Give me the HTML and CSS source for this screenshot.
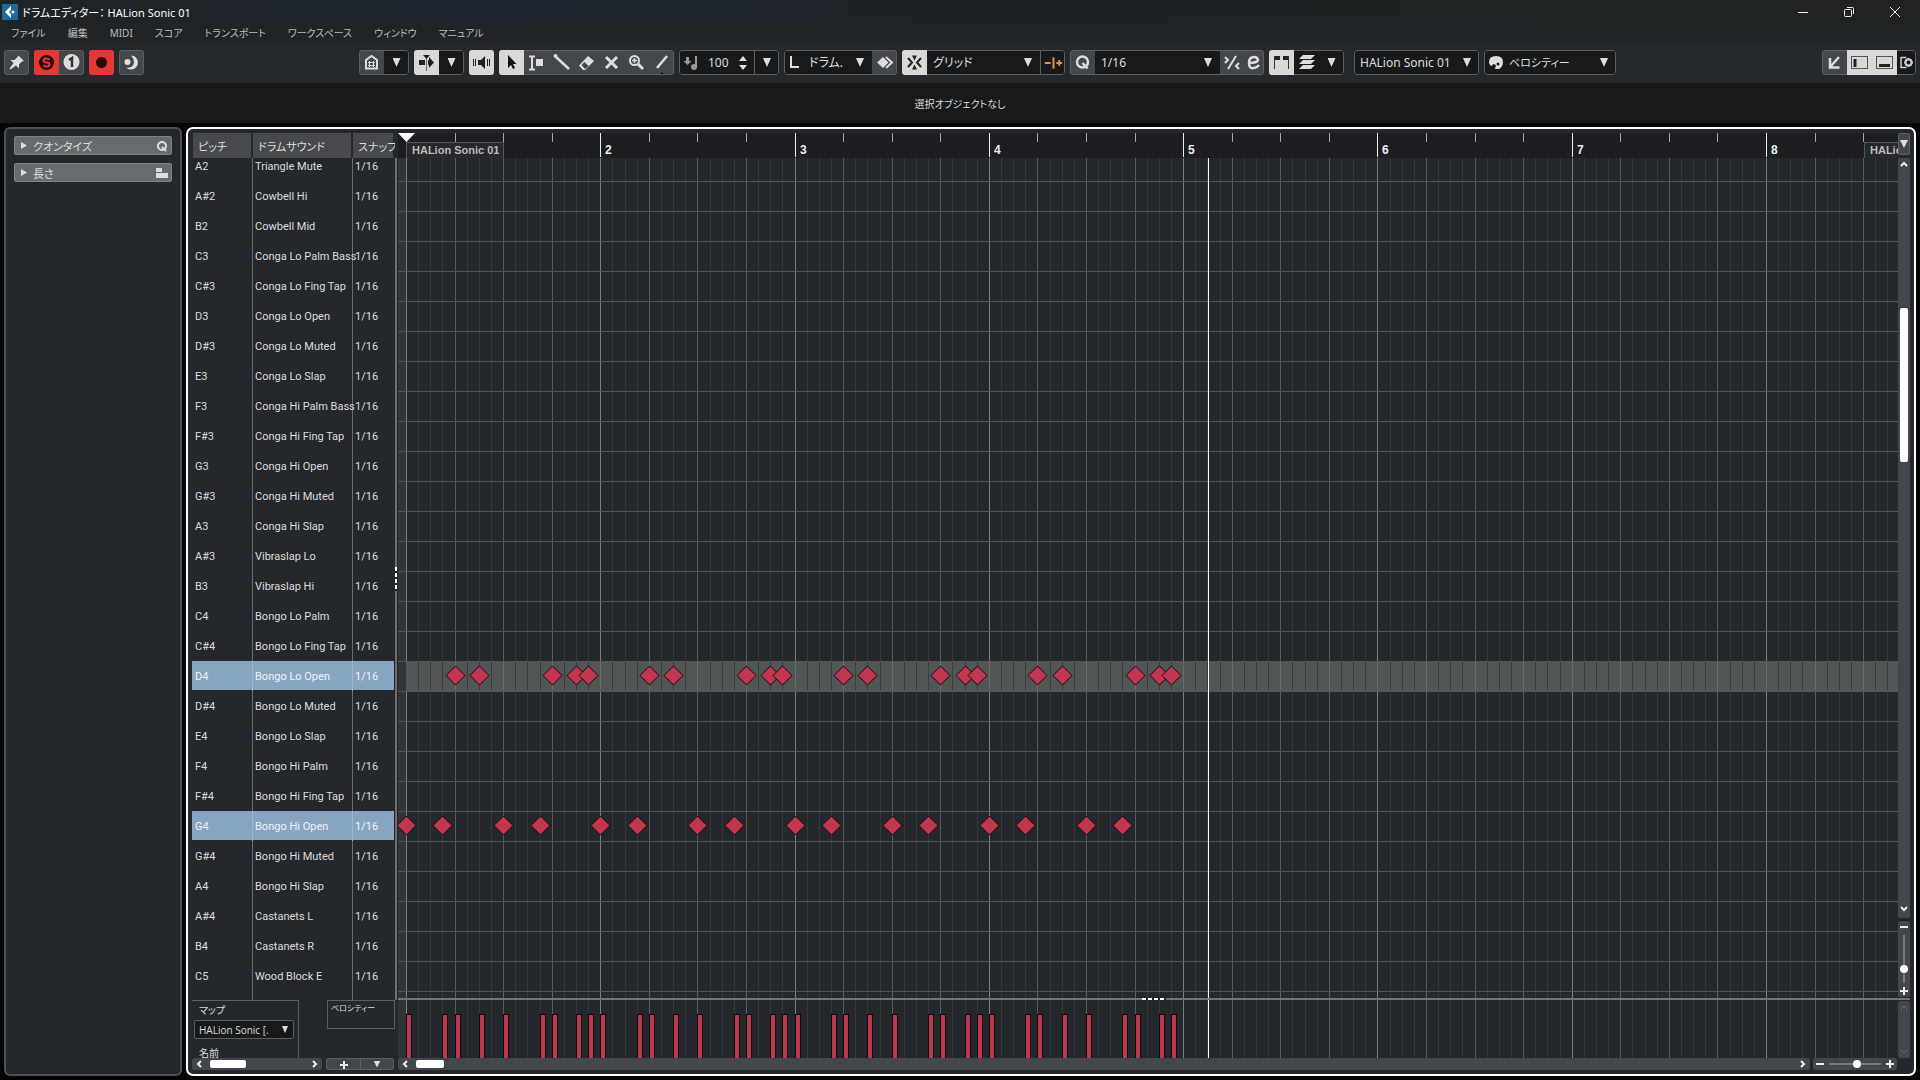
FILE: index.html
```
<!DOCTYPE html>
<html lang="ja">

<head>
  <meta charset="UTF-8">
  <meta name="viewport" content="width=device-width, initial-scale=1.0">
  <title>ドラムエディター： HALion Sonic 01</title>
  <link rel="stylesheet" href="styles.css">
</head>

<body>
  <header class="titlebar">
    <svg class="titlebar__logo" viewBox="0 0 16 16"><rect width="16" height="16" fill="#1d6a9c"/><path d="M9 2v4L7 8l2 2v4L3 8z" fill="#fff"/><circle cx="11" cy="8" r="1.500" fill="#fff"/></svg>
    <h1 class="titlebar__title">ドラムエディター： HALion Sonic 01</h1>
    <div class="titlebar__controls">
      <button aria-label="最小化"><svg viewBox="0 0 12 12"><path d="M1 6.500h10"/></svg></button>
      <button aria-label="元に戻す"><svg viewBox="0 0 12 12"><rect x="1.500" y="3.500" width="7" height="7" rx="1"/><path d="M4 1.500h5.500q1 0 1 1V8"/></svg></button>
      <button aria-label="閉じる"><svg viewBox="0 0 12 12"><path d="M1 1l10 10M11 1L1 11"/></svg></button>
    </div>
  </header>

  <nav class="menu">
    <a href="#file">ファイル</a>
    <a href="#edit">編集</a>
    <a href="#midi">MIDI</a>
    <a href="#score">スコア</a>
    <a href="#transport">トランスポート</a>
    <a href="#workspace">ワークスペース</a>
    <a href="#window">ウィンドウ</a>
    <a href="#manual">マニュアル</a>
  </nav>

  <div class="toolbar">
    <div class="group">
      <button class="tool" aria-label="ピン"><svg viewBox="0 0 25 25"><path d="M14.500 5.500l5.500 5.500-2 .5-3 3 0 4-3-3L6.500 19.500l-1-1L9.500 13l-3-3 4 0 3-3z" fill="#ddd"/></svg></button>
    </div>
    <div class="group">
      <button class="tool tool--red" aria-label="ソロ"><svg viewBox="0 0 25 25"><circle cx="12.500" cy="12.500" r="7.500" fill="#2d0606"/><path d="M15.500 10q-.5-1.500-3-1.500T9.500 10.500t3 2 3 2-3 2-3-1.500" fill="none" stroke="#e53737" stroke-width="2"/></svg></button>
      <button class="tool" aria-label="チャンネル"><svg viewBox="0 0 25 25"><circle cx="12.500" cy="12" r="8" fill="#ddd"/><path d="M10 10l3-2v9" fill="none" stroke="#333" stroke-width="2.500"/></svg></button>
    </div>
    <div class="group">
      <button class="tool tool--red" aria-label="録音"><svg viewBox="0 0 25 25"><circle cx="12.500" cy="12.500" r="5.500" fill="#2d0606"/></svg></button>
    </div>
    <div class="group">
      <button class="tool" aria-label="レトロスペクティブ録音"><svg viewBox="0 0 25 25"><path d="M12 5.500a7 7 0 1 1-5 12q7 1 8-5 0-4-3-7z" fill="#ddd"/><circle cx="8.500" cy="12" r="3" fill="#ddd"/></svg></button>
    </div>

    <div class="group group--main">
      <button class="tool" aria-label="スナップショット"><svg viewBox="0 0 25 25"><path d="M7 18.500V10l5.500-4L18 10v8.500z" fill="none" stroke="#ddd" stroke-width="2"/><path d="M9 12.500h7M9 15.500h7M10.500 11v6M14.500 11v6" stroke="#ddd"/></svg></button>
      <button class="tool tool--arrow" aria-label="スナップショット一覧"></button>
    </div>
    <div class="group">
      <button class="tool tool--on" aria-label="オートスクロール"><svg viewBox="0 0 25 25"><path d="M5 10h6v5H5zM14 10h1V7l5 5.500-5 5.500v-3h-1z" fill="#222"/><path d="M12.500 7v14" stroke="#666"/><path d="M9 5h7l-3.500 4z" fill="#222"/></svg></button>
      <button class="tool tool--arrow" aria-label="オートスクロール設定"></button>
    </div>
    <div class="group">
      <button class="tool tool--on" aria-label="試聴"><svg viewBox="0 0 25 25"><path d="M9 10h3l4-4v13l-4-4H9z" fill="#222"/><path d="M4.500 9v7M6.500 9v7M18.500 9v7M20.500 9v7" stroke="#222"/></svg></button>
    </div>
    <div class="group group--tools">
      <button class="tool tool--on" aria-label="選択"><svg viewBox="0 0 25 25"><path d="M9 5v13l3-3 2 4 2-1-2-4h3.500z" fill="#111"/></svg></button>
      <button class="tool" aria-label="範囲"><svg viewBox="0 0 25 25"><path d="M5 6.500h6M5 19.500h6M8 7v12" stroke="#ddd" stroke-width="2"/><path d="M12 9h7v7h-7z" fill="#ddd"/></svg></button>
      <button class="tool" aria-label="ドラムスティック"><svg viewBox="0 0 25 25"><path d="M7 7l13 12" stroke="#ddd" stroke-width="2.500"/><circle cx="6.500" cy="6" r="2" fill="#ddd"/></svg></button>
      <button class="tool" aria-label="消しゴム"><svg viewBox="0 0 25 25"><path d="M5 15.500L14 6l6 5-9 9H9z" fill="#ddd"/><path d="M7.500 15l3-3 4 4-3.500 3z" fill="#43464a"/></svg></button>
      <button class="tool" aria-label="ミュート"><svg viewBox="0 0 25 25"><path d="M7 7l11 11M18 7L7 18" stroke="#ddd" stroke-width="3"/></svg></button>
      <button class="tool" aria-label="ズーム"><svg viewBox="0 0 25 25"><circle cx="10.500" cy="10.500" r="4.500" fill="none" stroke="#ddd" stroke-width="2"/><path d="M14 14l5 5" stroke="#ddd" stroke-width="3"/><path d="M8 10.500h5M10.500 8v5" stroke="#ddd" stroke-width="1.500"/></svg></button>
      <button class="tool" aria-label="ライン"><svg viewBox="0 0 25 25"><path d="M8 18L18 6" stroke="#ddd" stroke-width="2.500"/><path d="M10 25l3-3 3 3z" fill="#111"/></svg></button>
    </div>
    <div class="group">
      <label class="velocity">
        <svg viewBox="0 0 25 25"><path d="M7 7h3v4h2.500L8.500 15l-4-4H7z" fill="#999"/><path d="M17 6v11" stroke="#999" stroke-width="2"/><circle cx="15" cy="17" r="3" fill="#999"/></svg>
        <input type="text" value="100" aria-label="挿入ベロシティー">
        <svg class="velocity__spin" viewBox="0 0 10 16"><path d="M5 1l4 5H1zM5 15l4-5H1z" fill="#ddd"/></svg>
      </label>
      <button class="tool tool--arrow tool--line" aria-label="ベロシティー一覧"></button>
    </div>
    <div class="group">
      <label class="drop drop--length">
        <svg viewBox="0 0 25 25"><path d="M7 6v11h8" fill="none" stroke="#ddd" stroke-width="2"/></svg>
        <select aria-label="長さ"><option>ドラム.</option></select>
      </label>
      <button class="tool" aria-label="長さリンク"><svg viewBox="0 0 25 25"><path d="M5 12.500L11 7l5.500 5.500L11 18z" fill="#ddd"/><path d="M14 7l6 5.500-6 5.500" fill="none" stroke="#ddd" stroke-width="2"/></svg></button>
    </div>
    <div class="group">
      <button class="tool tool--on" aria-label="スナップ"><svg viewBox="0 0 25 25"><path d="M6 8l4 4.500L6 17M19 8l-4 4.500 4 4.500" fill="none" stroke="#222" stroke-width="2"/><path d="M10 5.500h5l-2.500 5zM10 19.500h5l-2.500-5z" fill="#222"/></svg></button>
      <label class="drop drop--grid"><select aria-label="スナップタイプ"><option>グリッド</option></select></label>
      <button class="tool tool--dark tool--line" aria-label="相対グリッド"><svg viewBox="0 0 25 25"><path d="M4 13h6M13 7v12M16 13h6M19 10v6" stroke="#e09a45" stroke-width="2"/></svg></button>
    </div>
    <div class="group">
      <button class="tool" aria-label="クオンタイズを適用"><svg viewBox="0 0 25 25"><circle cx="12.500" cy="12" r="5.500" fill="none" stroke="#ddd" stroke-width="2.500"/><path d="M12.500 13l5 5.500" stroke="#ddd" stroke-width="2.500"/></svg></button>
      <label class="drop drop--quantize"><select aria-label="クオンタイズプリセット"><option>1/16</option></select></label>
      <button class="tool tool--slim" aria-label="ソフトクオンタイズ"><svg viewBox="0 0 22 25"><path d="M8 19L16 6" stroke="#ddd" stroke-width="2"/><path d="M5 7l3 3-3 3M19 13l-3 3 3 3" fill="none" stroke="#ddd" stroke-width="2"/></svg></button>
      <button class="tool tool--slim" aria-label="クオンタイズパネル"><svg viewBox="0 0 22 25"><path d="M7 13q8 0 9-3-.5-3-4-3-5 0-5 6t4.500 5q3 0 5.500-3" fill="none" stroke="#ddd" stroke-width="2.500"/></svg></button>
    </div>
    <div class="group">
      <button class="tool tool--on" aria-label="パート境界を表示"><svg viewBox="0 0 25 25"><path d="M5.500 19V7M19.500 19V7" stroke="#333"/><path d="M5 6h6v4H6zM20 6h-6v4h5z" fill="#222"/></svg></button>
      <button class="tool tool--dark" aria-label="パートのみ編集"><svg viewBox="0 0 25 25"><path d="M9 5h12l-4 4H5zM9 10h12l-4 4H5zM9 15h12l-4 4H5z" fill="#ddd"/></svg></button>
      <button class="tool tool--arrow" aria-label="パート一覧"></button>
    </div>
    <div class="group group--gap">
      <label class="drop drop--part"><select aria-label="編集中のパート"><option>HALion Sonic 01</option></select></label>
    </div>
    <div class="group">
      <label class="drop drop--color">
        <svg viewBox="0 0 25 25"><path d="M12 6q7 0 7 6 0 5-4 7l-4 0 1-4-3-1-1 2q-3-1-3-4 0-6 7-6z" fill="#ddd"/><circle cx="14" cy="14" r="1.500" fill="#17191b"/></svg>
        <select aria-label="カラー"><option>ベロシティー</option></select>
      </label>
    </div>

    <div class="group group--right">
      <button class="tool" aria-label="下ゾーンで開く"><svg viewBox="0 0 25 25"><path d="M17 7l-8 9M8 8v9.500h9.500" fill="none" stroke="#ddd" stroke-width="2.500"/></svg></button>
      <button class="tool tool--on" aria-label="左ゾーン"><svg viewBox="0 0 25 25"><rect x="4.500" y="6.500" width="16" height="12" fill="none" stroke="#555"/><path d="M8 9v8" stroke="#222" stroke-width="3"/></svg></button>
      <button class="tool tool--on" aria-label="下ゾーン"><svg viewBox="0 0 25 25"><rect x="4.500" y="6.500" width="16" height="12" fill="none" stroke="#555"/><path d="M7 15.500h11" stroke="#222" stroke-width="3"/></svg></button>
      <button class="tool tool--dark tool--cog" aria-label="レイアウト設定"><svg viewBox="0 0 18 25"><path d="M9 7.500H3.500v10H9" fill="none" stroke="#ccc" stroke-width="1.500"/><circle cx="11" cy="12.500" r="3" fill="none" stroke="#ccc" stroke-width="2"/><path d="M11 8v2M11 15v2M6.500 12.500h2M13.500 12.500h2M8 9.500l1 1M13 14.500l1 1M14 9.500l-1 1M9 14.500l-1 1" stroke="#ccc" stroke-width="2"/></svg></button>
    </div>
  </div>

  <div class="infoline">選択オブジェクトなし</div>

  <main class="workspace">
    <aside class="inspector">
      <button class="inspector__item"><span>クオンタイズ</span><svg viewBox="0 0 12 12"><circle cx="6" cy="6" r="4" fill="none" stroke="#ddd" stroke-width="2"/><path d="M6 7l4 4" stroke="#ddd" stroke-width="2"/></svg></button>
      <button class="inspector__item"><span>長さ</span><svg viewBox="0 0 12 12"><path d="M0 1h6v4H0zM0 6h12v5H0z" fill="#ddd"/></svg></button>
    </aside>

    <section class="editor">
      <div class="sounds">
        <table class="sounds__table">
          <thead>
            <tr><th class="sounds__pitch">ピッチ</th><th class="sounds__name">ドラムサウンド</th><th>スナップ</th></tr>
          </thead>
          <tbody id="sounds"></tbody>
        </table>
      </div>
      <div class="splitter"></div>
      <div class="ruler" id="ruler">
        <span class="ruler__part">HALion Sonic 01</span>
      </div>
      <div class="notes"><svg id="notes"></svg></div>
      <div class="divider"></div>

      <div class="map">
        <div class="map__box">
          <label for="map">マップ</label>
          <div class="drop drop--map"><select id="map"><option>HALion Sonic [.</option></select></div>
          <span>名前</span>
        </div>
        <div class="map__lane">ベロシティー</div>
      </div>
      <div class="lane"><svg id="lane"></svg></div>

      <button class="ruler-menu tool--arrow" aria-label="ルーラー形式"></button>
      <div class="side">
        <div class="vscroll">
          <svg viewBox="0 0 12 12"><path d="M3 8l3-3 3 3"/></svg>
          <div class="vscroll__track"><div class="vscroll__thumb"></div></div>
          <svg viewBox="0 0 12 12"><path d="M3 4l3 3 3-3"/></svg>
        </div>
        <div class="vzoom">
          <svg viewBox="0 0 12 12"><path d="M2 6h8"/></svg>
          <input type="range" value="76" aria-label="縦ズーム">
          <svg viewBox="0 0 12 12"><path d="M2 6h8M6 2v8"/></svg>
        </div>
      </div>
      <div class="lane-scroll">
        <svg viewBox="0 0 12 12"><path d="M3 8l3-3 3 3"/></svg>
        <svg viewBox="0 0 12 12"><path d="M3 4l3 3 3-3"/></svg>
      </div>

      <div class="left-foot">
        <div class="hscroll hscroll--list">
          <svg viewBox="0 0 12 12"><path d="M7 3L4 6l3 3"/></svg>
          <div class="hscroll__thumb"></div>
          <svg viewBox="0 0 12 12"><path d="M5 3l3 3-3 3"/></svg>
        </div>
        <div class="lane-buttons">
          <button aria-label="レーンを追加"><svg viewBox="0 0 12 12"><path d="M2 6h8M6 2v8"/></svg></button>
          <button class="tool--arrow" aria-label="レーン設定"></button>
        </div>
      </div>
      <div class="right-foot">
        <div class="hscroll hscroll--grid">
          <svg viewBox="0 0 12 12"><path d="M7 3L4 6l3 3"/></svg>
          <div class="hscroll__thumb"></div>
          <svg viewBox="0 0 12 12"><path d="M5 3l3 3-3 3"/></svg>
        </div>
        <div class="hzoom">
          <svg viewBox="0 0 12 12"><path d="M2 6h8"/></svg>
          <input type="range" value="54" aria-label="横ズーム">
          <svg viewBox="0 0 12 12"><path d="M2 6h8M6 2v8"/></svg>
        </div>
      </div>
    </section>
  </main>

  <script src="script.js"></script>
</body>

</html>
```
FILE: styles.css
```
:root {
  --bg: #24282c;
  --dark: #17191b;
  --button: #43464a;
  --line: #5c5f62;
  --text: #dcdcdc;
}

* {
  margin: 0;
  padding: 0;
  box-sizing: border-box;
}

body {
  display: flex;
  flex-direction: column;
  height: 100vh;
  overflow: hidden;
  background: #050506;
  color: var(--text);
  font-family: 'Noto Sans', 'Noto Sans CJK JP', sans-serif;
  font-size: 12px;
  font-feature-settings: 'palt';
}

button,
input,
select {
  font: inherit;
  font-feature-settings: inherit;
  color: inherit;
  background: none;
  border: 0;
  border-radius: 0;
  outline: none;
}

svg {
  display: block;
}

/* TITLE AND MENU */
.titlebar {
  display: flex;
  align-items: center;
  height: 23px;
  padding-left: 2px;
  background: linear-gradient(90deg, #202324 0, #1b242e 25%, #1e2225 50%, #202321 100%);
}

.titlebar__logo {
  width: 16px;
  height: 16px;
  margin-right: 4px;
}

.titlebar__title {
  font-size: 11px;
  font-weight: 400;
  color: #fff;
}

.titlebar__controls {
  display: flex;
  gap: 34px;
  margin-left: auto;
  margin-right: 19px;
}

.titlebar__controls svg {
  width: 12px;
  height: 12px;
  fill: none;
  stroke: #eee;
}

.menu {
  display: flex;
  gap: 22px;
  height: 20px;
  padding-left: 11px;
  line-height: 20px;
  font-size: 10px;
  background: #212427;
}

.menu a {
  color: #bbb;
  text-decoration: none;
}

/* TOOLBAR */
.toolbar {
  display: flex;
  gap: 5px;
  height: 40px;
  padding: 7px 4px 8px;
  background: #25292d;
}

.group {
  display: flex;
  flex: none;
  height: 25px;
  border-radius: 3px;
  overflow: hidden;
  position: relative;
  background: var(--dark);
}

.group::after {
  content: '';
  position: absolute;
  inset: 0;
  border: 1px solid var(--line);
  border-radius: 3px;
  pointer-events: none;
}

.group--main {
  margin-left: 210px;
}

.group--gap {
  margin-left: 5px;
}

.group--right {
  margin-left: auto;
}

.tool {
  width: 25px;
  height: 25px;
  background: var(--button);
}

.tool svg {
  width: 100%;
  height: 25px;
}

.tool--on {
  background: #d8d8d8;
  position: relative;
  z-index: 1;
}

.tool--red {
  background: #e53737;
  position: relative;
  z-index: 1;
}

.tool--dark {
  background: var(--dark);
}

.tool--line {
  border-left: 1px solid var(--line);
}

.tool--slim {
  width: 22px;
}

.tool--cog {
  width: 19px;
}

.tool--arrow {
  display: grid;
  place-items: center;
}

.tool.tool--arrow {
  background: var(--dark);
}

.tool--arrow::after,
.drop::after {
  content: '';
  width: 8px;
  height: 9px;
  background: #ddd;
  clip-path: polygon(0 0, 100% 0, 50% 100%);
}

.velocity {
  display: flex;
  align-items: center;
  width: 75px;
}

.velocity svg {
  width: 25px;
  height: 25px;
}

.velocity input {
  width: 30px;
  margin-left: 4px;
}

.velocity .velocity__spin {
  width: 10px;
  height: 16px;
}

.drop {
  display: flex;
  align-items: center;
  padding-right: 8px;
}

.drop svg {
  flex: none;
  width: 25px;
  height: 25px;
}

.drop select {
  flex: 1;
  min-width: 0;
  height: 100%;
  padding-left: 6px;
  appearance: none;
}

.drop svg + select {
  padding-left: 0;
}

.drop--length {
  width: 88px;
}

.drop--grid {
  width: 113px;
}

.drop--quantize {
  width: 125px;
}

.drop--part {
  width: 125px;
}

.drop--color {
  width: 132px;
}

.drop--color select {
  font-size: 11px;
}

.infoline {
  height: 40px;
  line-height: 42px;
  text-align: center;
  font-size: 10px;
  background: var(--dark);
}

/* WORKSPACE */
.workspace {
  flex: 1;
  min-height: 0;
  display: flex;
  gap: 4px;
  padding: 4px;
}

.inspector {
  display: flex;
  flex-direction: column;
  gap: 8px;
  width: 178px;
  padding: 7px 8px;
  border: 2px solid #4d4f52;
  border-radius: 6px;
  background: var(--bg);
}

.inspector__item {
  display: flex;
  align-items: center;
  height: 19px;
  padding: 0 3px 0 6px;
  font-size: 11px;
  background: #686b6d;
  border: 1px solid #808284;
  border-radius: 2px;
}

.inspector__item::before {
  content: '';
  width: 6px;
  height: 7px;
  margin-right: 6px;
  background: #ddd;
  clip-path: polygon(0 0, 100% 50%, 0 100%);
}

.inspector__item svg {
  width: 12px;
  height: 12px;
  margin-left: auto;
}

.editor {
  flex: 1;
  min-width: 0;
  display: grid;
  grid-template-columns: 203px 3px 1fr 12px;
  grid-template-rows: 25px 1fr 2px 58px 12px;
  padding: 4px;
  border: 2px solid #fff;
  border-radius: 7px;
  background: var(--bg);
}

/* SOUND LIST */
.sounds {
  grid-area: 1 / 1 / 4 / 2;
  overflow: hidden;
  background:
    linear-gradient(#6a6c6f, #6a6c6f) 60px 0 / 1px 100% no-repeat,
    linear-gradient(#6a6c6f, #6a6c6f) 160px 0 / 1px 100% no-repeat;
}

.sounds__table {
  width: 202px;
  table-layout: fixed;
  border-spacing: 0;
  font-family: Roboto, 'Noto Sans CJK JP', sans-serif;
  font-size: 11px;
}

.sounds__table th {
  height: 25px;
  padding-left: 5px;
  text-align: left;
  font-weight: 400;
  white-space: nowrap;
  background: #47494c;
  border-left: 1px solid var(--bg);
  border-right: 1px solid var(--bg);
}

.sounds__pitch {
  width: 60px;
}

.sounds__name {
  width: 100px;
}

.sounds__table td {
  height: 30px;
  padding: 0 0 5px 3px;
  line-height: 18px;
  vertical-align: bottom;
  white-space: nowrap;
}

/* the list is scrolled a little, so the first row is cut */
.sounds__table tbody tr:first-child td {
  height: 23px;
}

.sounds__row--on {
  background: linear-gradient(#87a5c1, #87a5c1) 0 0 / 100% 29px no-repeat;
}

.sounds__row--on td {
  color: #f0f3f6;
}

.sounds__row--on td + td {
  padding-left: 2px;
  border-left: 1px solid #a9b4bd;
}

.splitter {
  grid-area: 1 / 2 / 4 / 3;
  margin-top: 25px;
  margin-right: 1px;
  background:
    repeating-linear-gradient(#fff 0 4px, #222 4px 6px) 0 50% / 2px 24px no-repeat,
    #6a6c6f;
}

/* RULER AND GRID */
.ruler {
  grid-area: 1 / 3 / 2 / 4;
  position: relative;
  overflow: hidden;
  background: #1c1e22;
  font: bold 12px 'Liberation Sans', sans-serif;
}

.ruler::before {
  content: '';
  position: absolute;
  left: 0;
  top: 0;
  width: 17px;
  height: 9px;
  background: #fff;
  clip-path: polygon(0 0, 100% 0, 50% 100%);
}

.ruler__part {
  position: absolute;
  top: 9px;
  left: 8px;
  height: 17px;
  padding: 0 4px 0 5px;
  line-height: 15px;
  font-size: 11px;
  color: #bbb;
  background: #26282b;
  border: 1px solid #55575a;
}

.ruler__tick {
  position: absolute;
  top: 0;
  height: 9px;
  border-left: 1px solid #aaa;
}

.ruler__tick--bar {
  height: 24px;
  padding: 10px 0 0 4px;
  color: #eee;
  border-color: #eee;
}

.notes {
  grid-area: 2 / 3 / 3 / 4;
  overflow: hidden;
}

.notes svg,
.lane svg {
  width: 100%;
  height: 100%;
}

.grid-step {
  fill: #35393c;
}

.grid-beat {
  fill: #595c5e;
}

.grid-bar {
  fill: #7b7d7f;
}

.grid-row {
  fill: #515456;
}

.grid-before {
  fill: #303337;
}

.grid-active {
  fill: #535656;
}

.grid-active-step {
  fill: #3b3e3f;
}

.grid-active-beat {
  fill: #6a6d6d;
}

.playhead {
  fill: #fff;
}

.note {
  fill: #c0374f;
  stroke: #190609;
}

.hit {
  fill: #b83a50;
  stroke: #190609;
}

.divider {
  grid-area: 3 / 3 / 4 / 5;
  background:
    repeating-linear-gradient(90deg, #fff 0 4px, #222 4px 6px) 50% 0 / 24px 2px no-repeat,
    #737577;
}

.lane {
  grid-area: 4 / 3 / 5 / 4;
  overflow: hidden;
}

.map {
  grid-area: 4 / 1 / 5 / 2;
  display: flex;
  justify-content: space-between;
  align-items: flex-start;
  overflow: hidden;
}

.map__box {
  display: flex;
  flex-direction: column;
  width: 107px;
  height: 58px;
  padding-left: 2px;
  border-top: 1px solid var(--line);
  border-right: 1px solid var(--line);
  font-size: 10px;
}

.map__box label,
.map__box span {
  flex: none;
  height: 19px;
  padding-left: 5px;
  line-height: 18px;
}

.drop--map {
  flex: none;
  width: 100px;
  height: 19px;
  padding-right: 5px;
  border: 1px solid var(--line);
  border-radius: 2px;
  background: var(--dark);
}

.drop--map select {
  padding-left: 4px;
  font-family: 'Open Sans', sans-serif;
}

.drop--map::after {
  width: 6px;
  height: 7px;
}

.map__box span {
  line-height: 28px;
}

.map__lane {
  width: 68px;
  height: 29px;
  padding-left: 3px;
  line-height: 13px;
  font-size: 8px;
  border: 1px solid var(--line);
}

/* SCROLLBARS AND ZOOM */
.ruler-menu {
  grid-area: 1 / 4 / 2 / 5;
  height: 22px;
  background: var(--button);
  border: 1px solid var(--line);
  border-radius: 2px;
}

.ruler-menu::after {
  width: 8px;
  height: 8px;
}

.side {
  grid-area: 2 / 4 / 3 / 5;
  display: flex;
  flex-direction: column;
  gap: 3px;
}

.vscroll,
.vzoom,
.lane-scroll {
  display: flex;
  flex-direction: column;
  align-items: center;
  background: var(--button);
  border-radius: 2px;
}

.vscroll {
  flex: 1;
}

.vscroll svg,
.vzoom svg,
.lane-scroll svg,
.hscroll svg,
.hzoom svg,
.lane-buttons svg {
  flex: none;
  width: 12px;
  height: 12px;
  fill: none;
  stroke: #eee;
  stroke-width: 2;
}

.vscroll__track {
  flex: 1;
  width: 8px;
}

.vscroll svg:last-child {
  margin-bottom: 3px;
}

.vscroll__thumb {
  height: 21%;
  margin-top: 138px;
  background: #fff;
  border-radius: 2px;
}

.vzoom {
  height: 76px;
  margin-bottom: 1px;
  justify-content: space-between;
}

input[type='range'] {
  appearance: none;
  cursor: pointer;
}

input[type='range']::-webkit-slider-thumb {
  appearance: none;
  width: 8px;
  height: 8px;
  border-radius: 50%;
  background: #fff;
}

.vzoom input {
  writing-mode: vertical-lr;
  width: 8px;
  height: 48px;
  background: linear-gradient(#777, #777) center / 2px 100% no-repeat;
}

.lane-scroll {
  grid-area: 4 / 4 / 5 / 5;
  margin-top: 1px;
  justify-content: space-between;
}

.lane-scroll svg {
  stroke: #707275;
  stroke-width: 1;
}

.left-foot {
  grid-area: 5 / 1 / 6 / 2;
  display: flex;
  gap: 4px;
  padding-right: 1px;
}

.hscroll {
  flex: 1;
  display: flex;
  align-items: center;
  background: var(--button);
  border-radius: 2px;
}

.hscroll svg:last-child {
  margin-left: auto;
  margin-right: 2px;
}

.hscroll svg:first-child {
  margin-left: 2px;
}

.hscroll__thumb {
  width: 36px;
  height: 8px;
  margin-left: 4px;
  background: #fff;
  border-radius: 2px;
}

.hscroll--grid .hscroll__thumb {
  width: 28px;
}

.lane-buttons {
  display: grid;
  grid-template-columns: 1fr 1fr;
  width: 68px;
  background: var(--button);
  border: 1px solid var(--line);
  border-radius: 2px;
}

.lane-buttons button {
  display: grid;
  place-items: center;
  height: 10px;
}

.lane-buttons .tool--arrow {
  border-left: 1px solid var(--line);
}

.lane-buttons .tool--arrow::after {
  width: 7px;
  height: 7px;
}

.right-foot {
  grid-area: 5 / 3 / 6 / 5;
  display: flex;
  gap: 3px;
  padding-right: 13px;
}

.hzoom {
  display: flex;
  align-items: center;
  justify-content: space-between;
  width: 84px;
  padding: 0 1px;
  background: var(--button);
  border-radius: 2px;
}

.hzoom input {
  width: 52px;
  height: 8px;
  background: linear-gradient(#777, #777) center / 100% 2px no-repeat;
}
```
FILE: script.js
```
const sounds = [
  ['A2', 'Triangle Mute'], ['A#2', 'Cowbell Hi'], ['B2', 'Cowbell Mid'],
  ['C3', 'Conga Lo Palm Bass'], ['C#3', 'Conga Lo Fing Tap'], ['D3', 'Conga Lo Open'],
  ['D#3', 'Conga Lo Muted'], ['E3', 'Conga Lo Slap'], ['F3', 'Conga Hi Palm Bass'],
  ['F#3', 'Conga Hi Fing Tap'], ['G3', 'Conga Hi Open'], ['G#3', 'Conga Hi Muted'],
  ['A3', 'Conga Hi Slap'], ['A#3', 'Vibraslap Lo'], ['B3', 'Vibraslap Hi'],
  ['C4', 'Bongo Lo Palm'], ['C#4', 'Bongo Lo Fing Tap'], ['D4', 'Bongo Lo Open'],
  ['D#4', 'Bongo Lo Muted'], ['E4', 'Bongo Lo Slap'], ['F4', 'Bongo Hi Palm'],
  ['F#4', 'Bongo Hi Fing Tap'], ['G4', 'Bongo Hi Open'], ['G#4', 'Bongo Hi Muted'],
  ['A4', 'Bongo Hi Slap'], ['A#4', 'Castanets L'], ['B4', 'Castanets R'],
  ['C5', 'Wood Block E']
];
const loOpen = 17;
const hiOpen = 22;

document.getElementById('sounds').innerHTML = sounds.map(([pitch, name], i) => {
  const on = i === loOpen || i === hiOpen ? ' class="sounds__row--on"' : '';
  return `<tr${on}><td>${pitch}</td><td>${name}</td><td>1/16</td></tr>`;
}).join('');

// timeline: 16 steps in a bar, bar 1 starts 8px in
const rowHeight = 30;
const scrolled = 7;
const stepX = (step) => 8 + Math.round(step * 1360 / 112);
const rowY = (row) => row * rowHeight - scrolled;
const rect = (name, x, y, w, h) => `<rect class="${name}" x="${x}" y="${y}" width="${w}" height="${h}"/>`;

const ruler = document.getElementById('ruler');
const steps = Math.floor((ruler.clientWidth - 8) * 112 / 1360) + 1;

const stepClass = (step) => {
  if (step % 16 === 0) return 'grid-bar';
  return step % 4 === 0 ? 'grid-beat' : 'grid-step';
};

// ruler
let ticks = '';
for (let step = 4; step < steps; step += 4) {
  const bar = step % 16 === 0;
  ticks += `<span class="ruler__tick${bar ? ' ruler__tick--bar' : ''}" style="left:${stepX(step)}px">${bar ? step / 16 + 1 : ''}</span>`;
}
ticks += `<span class="ruler__part" style="left:${stepX(120) + 1}px">HALion Sonic 01</span>`;
ruler.insertAdjacentHTML('beforeend', ticks);

// notes
const pattern = [4, 6, 12, 14, 15];
const lo = [0, 16, 32, 48].flatMap((bar) => pattern.map((step) => bar + step));
const hi = [0, 16, 32, 48].flatMap((bar) => [0, 3, 8, 11].map((step) => bar + step));
const playhead = rect('playhead', stepX(66) + 1, 0, 1, '100%');

let grid = rect('grid-before', 0, 0, 8, '100%');
for (let step = 0; step < steps; step++) {
  grid += rect(stepClass(step), stepX(step), 0, 1, '100%');
}
const columns = grid;
for (let row = 1; row <= sounds.length; row++) {
  grid += rect('grid-row', 0, rowY(row), '100%', 1);
}
grid += rect('grid-active', 8, rowY(loOpen), '100%', rowHeight + 1);
for (let step = 1; step < steps; step++) {
  const name = step % 4 ? 'grid-active-step' : 'grid-active-beat';
  grid += rect(name, stepX(step), rowY(loOpen) + 1, 1, rowHeight - 2);
}

const diamond = (step, row) => {
  const x = stepX(step) + 0.5;
  const y = rowY(row) + 14.5;
  return `<path class="note" d="M${x - 9.5} ${y}l9.5-9.5 9.5 9.5-9.5 9.5z"/>`;
};
grid += lo.map((step) => diamond(step, loOpen)).join('');
grid += hi.map((step) => diamond(step, hiOpen)).join('');
document.getElementById('notes').innerHTML = grid + playhead;

// velocity lane
const hits = [...lo, ...hi].map((step) => rect('hit', stepX(step) + 0.5, 14.5, 5, 60)).join('');
document.getElementById('lane').innerHTML = columns + hits + playhead;
```
